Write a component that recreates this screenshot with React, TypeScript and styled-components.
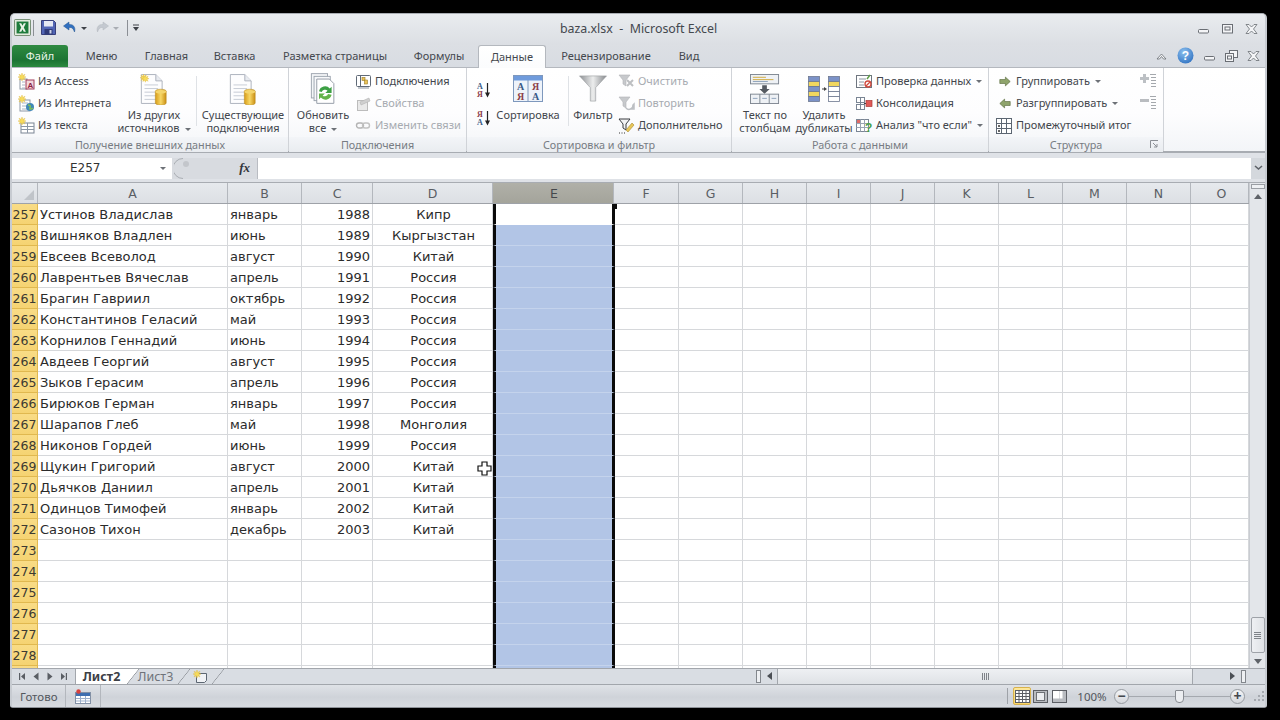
import React from "react";
import styled, { createGlobalStyle } from "styled-components";

const UI_FONT = `"Noto Sans", "DejaVu Sans", sans-serif`;
const CELL_FONT = `"DejaVu Sans", "Noto Sans", sans-serif`;

const Global = createGlobalStyle`
  html, body { margin: 0; height: 720px; background: #000; overflow: hidden; }
  #root { width: 1280px; height: 720px; }
  * { box-sizing: border-box; }
`;

const Screen = styled.div`
  width: 1280px;
  height: 720px;
  background: #000;
  padding: 13px 13px 12px 10px;
  font-family: ${UI_FONT};
`;
const Win = styled.div`
  position: relative;
  height: 695px;
  border-radius: 5px 5px 3px 3px;
  background: #d9dde3;
  border: 2px solid #c7cbd1;
  border-top: 1px solid #a9adb3;
  border-bottom: 1px solid #8e9298;
  display: flex;
  flex-direction: column;
  overflow: hidden;
`;

/* title bar */
const TitleBar = styled.div`
  height: 30px;
  flex: none;
  display: grid;
  grid-template-columns: 1fr auto 1fr;
  align-items: center;
  background: linear-gradient(#e9ecef, #dcdfe4);
`;
const Qat = styled.div`
  display: flex;
  align-items: center;
  padding: 0 0 3px 2px;
`;
const Title = styled.div`
  font-size: 12.4px;
  padding-bottom: 2px;
  color: #44484e;
`;
const WinBtns = styled.div`
  display: flex;
  justify-content: flex-end;
  align-items: center;
  gap: 11px;
  padding-right: 7px;
`;

/* tabs */
const TabRow = styled.div`
  height: 23px;
  flex: none;
  display: flex;
  align-items: flex-end;
  background: linear-gradient(#dcdfe4, #d8dce2);
`;
const FileTab = styled.div`
  width: 56px;
  height: 22px;
  margin-right: 1px;
  padding-bottom: 1px;
  border-radius: 3px 3px 0 0;
  background: linear-gradient(#2f8a42, #1c7433 70%, #2c8a3f);
  color: #e9f5ea;
  font-size: 11px;
  display: flex;
  align-items: center;
  justify-content: center;
`;
const Tab = styled.div<{ $w: number; $active?: boolean }>`
  width: ${(p) => p.$w}px;
  height: ${(p) => (p.$active ? 23 : 22)}px;
  padding-bottom: 1px;
  display: flex;
  align-items: center;
  justify-content: center;
  white-space: nowrap;
  font-size: 11px;
  color: #44484e;
  ${(p) =>
    p.$active &&
    `background: linear-gradient(#fff, #fbfcfd);
     border: 1px solid #b4b8be;
     border-bottom: none;
     border-radius: 3px 3px 0 0;
     margin-bottom: -1px;
     position: relative;
     z-index: 1;`}
`;
const TabSpacer = styled.div`
  flex: 1;
`;
const HelpBtns = styled.div`
  display: flex;
  align-items: center;
  gap: 9px;
  height: 23px;
  padding-right: 5px;
`;

/* ribbon */
const Ribbon = styled.div`
  height: 86px;
  flex: none;
  display: flex;
  border-top: 1px solid #b4b8be;
  border-bottom: 2px solid #a8acb2;
  background: linear-gradient(#fff, #fdfdfe 55%, #f3f5f8);
`;
const Group = styled.div<{ $w: number }>`
  position: relative;
  width: ${(p) => p.$w}px;
  flex: none;
  display: flex;
  flex-direction: column;
  border-right: 1px solid #d0d3d8;
`;
const GroupBody = styled.div<{ $pl: number }>`
  height: 69px;
  flex: none;
  display: flex;
  padding: 2px 0 0 ${(p) => p.$pl}px;
`;
const GroupLabel = styled.div`
  flex: 1;
  display: flex;
  align-items: center;
  justify-content: center;
  font-size: 10.8px;
  color: #777c83;
  background: linear-gradient(#f3f5f8, #e9ecf0);
`;
const Launcher = styled.div`
  position: absolute;
  right: 4px;
  bottom: 2px;
  width: 9px;
  height: 9px;
  display: flex;
`;
const Stack = styled.div<{ $w: number; $ml?: number }>`
  width: ${(p) => p.$w}px;
  margin-left: ${(p) => p.$ml ?? 0}px;
  flex: none;
  display: flex;
  flex-direction: column;
`;
const SortStack = styled.div`
  width: 17px;
  flex: none;
  display: flex;
  flex-direction: column;
  gap: 12px;
  padding-top: 12px;
`;
const SmallBtn = styled.div<{ $off?: boolean }>`
  height: 22px;
  display: flex;
  align-items: center;
  gap: 3px;
  white-space: nowrap;
  font-size: 11px;
  color: ${(p) => (p.$off ? "#a7abb1" : "#42464c")};
`;
const SmallLabel = styled.span`
  padding-bottom: 2px;
`;
const SmallIcon = styled.div`
  width: 17px;
  height: 17px;
  flex: none;
  display: flex;
  align-items: center;
  justify-content: center;
`;
const Caret = styled.span`
  width: 0;
  height: 0;
  margin-left: 5px;
  border: 3px solid transparent;
  border-top: 3px solid #6d7177;
  border-bottom: none;
  display: inline-block;
  vertical-align: middle;
`;
const BigBtn = styled.div<{ $w: number; $ml?: number }>`
  width: ${(p) => p.$w}px;
  margin-left: ${(p) => p.$ml ?? 0}px;
  flex: none;
  display: flex;
  flex-direction: column;
  align-items: center;
`;
const BigIcon = styled.div`
  height: 37px;
  flex: none;
  display: flex;
  align-items: center;
  justify-content: center;
`;
const BigText = styled.div`
  font-size: 11px;
  line-height: 13px;
  padding-top: 1px;
  color: #42464c;
  text-align: center;
  white-space: nowrap;
`;
const RibbonSep = styled.div<{ $ml: number }>`
  width: 1px;
  height: 50px;
  margin: 6px 0 0 ${(p) => p.$ml}px;
  flex: none;
  background: #dfe2e6;
`;

/* formula bar */
const FormulaBar = styled.div`
  height: 29px;
  flex: none;
  display: flex;
  align-items: center;
  background: #dfe2e7;
  padding: 4px 0 3px;
`;
const NameBox = styled.div`
  width: 160px;
  height: 21px;
  background: #fff;
  display: flex;
  align-items: center;
  justify-content: space-between;
  padding: 0 6px 0 58px;
  font-size: 12px;
  font-family: ${CELL_FONT};
  color: #333;
`;
const FxBox = styled.div`
  width: 85px;
  height: 21px;
  flex: none;
  display: flex;
  align-items: center;
  justify-content: space-between;
  padding: 0 7px 0 2px;
  background: #d8dbe0;
  font-family: "Liberation Serif", serif;
  font-style: italic;
  font-weight: bold;
  font-size: 13px;
  color: #33363b;
`;
const FormulaInput = styled.div`
  flex: 1;
  height: 21px;
  background: #fff;
  border-left: 1px solid #b9bcc2;
`;
const FormulaDrop = styled.div`
  width: 14px;
  height: 21px;
  flex: none;
  background: #d4d8dd;
  display: flex;
  align-items: center;
  justify-content: center;
`;

/* sheet */
const SheetArea = styled.div`
  flex: 1;
  min-height: 0;
  display: flex;
  border-top: 1px solid #a8acb2;
`;
const Sheet = styled.div`
  width: 1237px;
  flex: none;
  position: relative;
  overflow: hidden;
  background: #fff;
  font-family: ${CELL_FONT};
`;
const GRID = "26px 190px 74px 71px 120px 121px 65px repeat(7, 64px) 64px 58px";
const HeadRow = styled.div`
  display: grid;
  grid-template-columns: ${GRID};
  height: 21px;
  border-bottom: 1px solid #9ea2a8;
`;
const HeadCell = styled.div<{ $sel?: boolean; $pl?: number }>`
  display: flex;
  align-items: center;
  justify-content: center;
  padding-left: ${(p) => p.$pl ?? 0}px;
  font-size: 12.5px;
  color: ${(p) => (p.$sel ? "#45484c" : "#5a5e64")};
  background: ${(p) => (p.$sel ? "linear-gradient(#b0b0a8, #a4a49b)" : "linear-gradient(#e6e9ed, #dcdfe4)")};
  border-right: 1px solid #b3b7bd;
`;
const Corner = styled.div`
  background: linear-gradient(#e6e9ed, #dcdfe4);
  border-right: 1px solid #b3b7bd;
  display: flex;
  align-items: flex-end;
  justify-content: flex-end;
  padding: 0 3px 3px 0;
`;
const CornerMark = styled.div`
  width: 0;
  height: 0;
  border-left: 10px solid transparent;
  border-bottom: 10px solid #c0c4c9;
`;
const Row = styled.div`
  display: grid;
  grid-template-columns: ${GRID};
  height: 21px;
`;
const RowHead = styled.div`
  display: flex;
  align-items: center;
  justify-content: center;
  font-size: 12.5px;
  color: #3c3a32;
  background: linear-gradient(#f9dc86, #f5d372);
  border-bottom: 1px solid #e0b84f;
  border-right: 1px solid #e0b84f;
`;
const Cell = styled.div<{ $align?: string }>`
  display: flex;
  align-items: center;
  justify-content: ${(p) => p.$align ?? "flex-start"};
  padding: 0 2px 0 ${(p) => (p.$align === "center" ? 4 : 2)}px;
  font-size: 13px;
  white-space: nowrap;
  color: #2b2b2b;
  border-right: 1px solid #d6d8db;
  border-bottom: 1px solid #d6d8db;
`;
const SelCell = styled.div<{ $first?: boolean }>`
  margin-right: -1px;
  position: relative;
  background: ${(p) => (p.$first ? "#fff" : "#b2c5e6")};
  border-left: 3px solid #0a0a0a;
  border-right: 3px solid #0a0a0a;
  border-bottom: 1px solid ${(p) => (p.$first ? "#fff" : "#c4d3ec")};
`;
const FillHandle = styled.div`
  position: absolute;
  left: 600px;
  top: 21px;
  width: 5px;
  height: 5px;
  background: #0a0a0a;
`;
const CursorMark = styled.svg`
  position: absolute;
  left: 465px;
  top: 278px;
`;
const VScroll = styled.div`
  flex: 1;
  display: flex;
  flex-direction: column;
  align-items: center;
  background: #e3e6ea;
  border-left: 1px solid #c9ccd1;
`;
const VSplit = styled.div`
  width: 14px;
  height: 5px;
  margin-top: 1px;
  background: #eef0f3;
  border: 1px solid #9a9ea4;
`;
const VGap = styled.div<{ $h: number }>`
  height: ${(p) => p.$h}px;
  flex: none;
`;
const ArrowUp = styled.div`
  margin-top: 5px;
  width: 0;
  height: 0;
  border: 4px solid transparent;
  border-top: none;
  border-bottom: 5px solid #5e6268;
`;
const ArrowDown = styled.div`
  width: 0;
  height: 0;
  border: 4px solid transparent;
  border-bottom: none;
  border-top: 5px solid #5e6268;
`;
const VThumb = styled.div`
  width: 14px;
  height: 36px;
  border: 1px solid #9ea2a8;
  border-radius: 2px;
  background: linear-gradient(90deg, #eef0f3, #dfe2e6);
  display: flex;
  flex-direction: column;
  align-items: center;
  justify-content: center;
  gap: 1px;
`;
const GripLine = styled.div`
  width: 7px;
  height: 1px;
  background: #7f8389;
`;

/* sheet tabs + horizontal scroll */
const TabsBar = styled.div`
  height: 17px;
  flex: none;
  display: flex;
  align-items: stretch;
  background: #d9dde3;
  border-top: 1px solid #a2a6ac;
  border-bottom: 1px solid #a2a6ac;
`;
const NavBtns = styled.div`
  width: 64px;
  flex: none;
  display: flex;
  align-items: center;
  justify-content: space-between;
  padding: 0 7px 0 6px;
  border-right: 1px solid #a2a6ac;
`;
const SLANT_W = 12;
const SheetTab = styled.div<{ $active?: boolean }>`
  position: relative;
  width: 51px;
  flex: none;
  display: flex;
  align-items: center;
  justify-content: center;
  padding-left: ${(p) => (p.$active ? 0 : 6)}px;
  font-size: 12.5px;
  font-weight: ${(p) => (p.$active ? 700 : 400)};
  color: ${(p) => (p.$active ? "#3c4046" : "#6f737a")};
  background: ${(p) => (p.$active ? "#fff" : "transparent")};
  &::after {
    content: "";
    position: absolute;
    top: 0;
    right: -${SLANT_W}px;
    width: ${SLANT_W}px;
    height: 100%;
    background: linear-gradient(
      to top left,
      transparent calc(50% - 0.6px),
      #8f9399 50%,
      ${(p) => (p.$active ? "#fff" : "transparent")} calc(50% + 0.6px)
    );
  }
`;
const NewTab = styled.div`
  position: relative;
  width: 34px;
  flex: none;
  display: flex;
  align-items: center;
  padding-left: 15px;
  &::after {
    content: "";
    position: absolute;
    top: 0;
    right: -${SLANT_W}px;
    width: ${SLANT_W}px;
    height: 100%;
    background: linear-gradient(to top left, transparent calc(50% - 0.6px), #8f9399 50%, transparent calc(50% + 0.6px));
  }
`;
const TabsFill = styled.div`
  flex: 1;
`;
const HSplit = styled.div<{ $ml?: number; $mr?: number }>`
  width: 5px;
  margin: 1px ${(p) => p.$mr ?? 0}px 1px ${(p) => p.$ml ?? 0}px;
  flex: none;
  background: #eef0f3;
  border: 1px solid #83878d;
`;
const HLeft = styled.div`
  width: 0;
  height: 0;
  margin: 3px 5px 0 6px;
  border: 4px solid transparent;
  border-left: none;
  border-right: 5px solid #4a4e54;
`;
const HThumb = styled.div`
  width: 416px;
  flex: none;
  background: linear-gradient(#eef0f3, #dfe2e6);
  border-left: 1px solid #a2a6ac;
  border-right: 1px solid #a2a6ac;
  display: flex;
  align-items: center;
  justify-content: center;
  gap: 1px;
`;
const HGripLine = styled.div`
  width: 1px;
  height: 7px;
  background: #7f8389;
`;
const HRight = styled.div`
  width: 0;
  height: 0;
  margin: 3px 0 0 37px;
  border: 4px solid transparent;
  border-right: none;
  border-left: 5px solid #4a4e54;
`;

/* status bar */
const StatusBar = styled.div`
  height: 22px;
  flex: none;
  display: flex;
  align-items: center;
  background: linear-gradient(#dfe2e7, #cfd3d9 55%, #d8dbe0);
  font-size: 11.5px;
  color: #53575d;
`;
const StatusText = styled.div`
  width: 54px;
  height: 100%;
  flex: none;
  display: flex;
  align-items: center;
  padding-left: 8px;
  border-right: 1px solid #b3b7bd;
`;
const StatusMacro = styled.div`
  width: 35px;
  height: 100%;
  flex: none;
  display: flex;
  align-items: center;
  justify-content: center;
  border-right: 1px solid #b3b7bd;
`;
const StatusRight = styled.div`
  margin-left: auto;
  display: flex;
  align-items: center;
  height: 100%;
`;
const ViewSep = styled.div`
  width: 1px;
  height: 16px;
  margin-right: 5px;
  background: #9ea2a8;
`;
const ViewBtn = styled.div<{ $on?: boolean; $mr: number }>`
  width: 18px;
  height: 18px;
  margin-right: ${(p) => p.$mr}px;
  display: flex;
  align-items: center;
  justify-content: center;
  border-radius: 2px;
  ${(p) => p.$on && "background: linear-gradient(#fde79b, #f9d568); border: 1px solid #d8b24c;"}
`;
const Zoom = styled.div`
  width: 38px;
  margin: 0 3px 0 2px;
  text-align: center;
  font-size: 11.5px;
`;
const RoundBtn = styled.div`
  width: 15px;
  height: 15px;
  flex: none;
  border-radius: 50%;
  border: 1px solid #979ba1;
  background: linear-gradient(#f4f5f7, #d4d7dc);
  display: flex;
  align-items: center;
  justify-content: center;
  font-size: 14px;
  font-weight: bold;
  line-height: 1;
  color: #44484e;
`;
const Slider = styled.div`
  position: relative;
  width: 101px;
  height: 1px;
  background: #a5a9af;
`;
const SliderThumb = styled.div`
  position: absolute;
  left: 46px;
  top: -6px;
  width: 9px;
  height: 13px;
  background: #eceef1;
  border: 1px solid #888c92;
  border-radius: 1px 1px 4px 4px;
`;
const Grip = styled.svg`
  margin-left: 9px;
`;

/* icons */
const Star = ({ x = 0, y = 0 }: { x?: number; y?: number }) => (
  <path
    transform={`translate(${x} ${y})`}
    d="M4 0l.8 2.4L7 1.2 5.8 3.4 8 4 5.8 4.8 7 7 4.8 5.8 4 8 3.2 5.8 1 7l1.200-2.200L0 4l2.200-.6L1 1.200l2.200 1.200z"
    fill="#f7dc5c"
    stroke="#e0b93a"
    strokeWidth=".4"
  />
);
const Sheetlet = ({ x, y, w, h }: { x: number; y: number; w: number; h: number }) => (
  <g>
    <rect x={x} y={y} width={w} height={h} fill="#fff" stroke="#8d97a5" />
    <path d={`M${x + 2} ${y + 3}h${w - 4}M${x + 2} ${y + 6}h${w - 4}M${x + 2} ${y + 9}h${w - 4}`} stroke="#a7b2c2" />
  </g>
);
const IconAccess = () => (
  <svg width="17" height="17" viewBox="0 0 17 17">
    <Sheetlet x={2} y={6} w={7} h={10} />
    <rect x={8} y={7} width={8} height={9} fill="#f3d7dc" stroke="#a03a58" />
    <text x={9.500} y={15} fontSize="8" fontWeight="bold" fill="#8e1f45" fontFamily="Liberation Sans">A</text>
    <Star x={0} y={0} />
  </svg>
);
const IconWeb = () => (
  <svg width="17" height="17" viewBox="0 0 17 17">
    <Sheetlet x={2} y={5} w={10} h={11} />
    <circle cx="12" cy="12" r="4" fill="#3f87b8" />
    <path d="M10 10c2 0 3 1 2 3s2 1 3 0" stroke="#7fbf58" strokeWidth="1.500" fill="none" />
    <Star x={0} y={0} />
  </svg>
);
const IconText = () => (
  <svg width="17" height="17" viewBox="0 0 17 17">
    <rect x="3" y="6" width="13" height="10" fill="#fff" stroke="#7a8594" />
    <path d="M3 9.500h13M3 12.500h13M9.500 6v10" stroke="#8c97a6" />
    <Star x={0} y={0} />
  </svg>
);
const DocDb = ({ star }: { star?: boolean }) => (
  <svg width="28" height="32" viewBox="3 1 31 35">
    <defs>
      <linearGradient id="db" x1="0" x2="1">
        <stop offset="0" stopColor="#d89c18" />
        <stop offset=".5" stopColor="#f7d766" />
        <stop offset="1" stopColor="#c98d12" />
      </linearGradient>
    </defs>
    <path d="M4.500 2.500h16l7 7v25h-23z" fill="#fdfdfe" stroke="#a6adb8" />
    <path d="M20.500 2.500v7h7" fill="#e8ebf0" stroke="#a6adb8" />
    <path d="M8 14h15M8 18h15M8 22h13M8 26h13M8 30h13" stroke="#c2c8d2" />
    <path d="M20 21c0-3 12-3 12 0v13c0 3-12 3-12 0z" fill="url(#db)" stroke="#b88a1e" strokeWidth=".6" />
    <ellipse cx="26" cy="21.500" rx="6" ry="2" fill="#f4d56c" />
    {star && <Star x={3} y={2} />}
    {star && <Star x={5} y={3} />}
  </svg>
);
const IconRefreshAll = () => (
  <svg width="27" height="33" viewBox="0 0 30 36">
    <rect x="1.500" y="1.500" width="18" height="27" fill="#f4f6f8" stroke="#98a0ab" />
    <rect x="4.500" y="4.500" width="18" height="27" fill="#f8f9fb" stroke="#98a0ab" />
    <path d="M7.500 7.500h14l5 5v22h-19z" fill="#fff" stroke="#8d95a1" />
    <path d="M10 21a7 7 0 0 1 12-3l2-2v7h-7l2.500-2.500A4 4 0 0 0 13 22z" fill="#3da044" />
    <path d="M24 25a7 7 0 0 1-12 3l-2 2v-6.500h6.500L14 26a4 4 0 0 0 6-2z" fill="#63b44a" />
  </svg>
);
const IconConnections = () => (
  <svg width="17" height="17" viewBox="0 0 17 17">
    <rect x="1.500" y="2.500" width="14" height="11" rx="1" fill="#fff" stroke="#5f6976" />
    <path d="M5.500 2.500v11" stroke="#5f6976" />
    <rect x="7" y="4.500" width="3" height="3" fill="#ecc55a" stroke="#987a25" strokeWidth=".6" />
    <rect x="9.500" y="7" width="3" height="4" fill="#ecc55a" stroke="#987a25" strokeWidth=".6" />
    <path d="M3 15h11" stroke="#8d95a1" />
  </svg>
);
const IconProps = () => (
  <svg width="17" height="17" viewBox="0 0 17 17">
    <rect x="2.500" y="5.500" width="10" height="10" fill="#e9e9e9" stroke="#bcbcbc" />
    <path d="M5 7l9-4 1 3-9 4z" fill="#cfcfcf" stroke="#b3b3b3" strokeWidth=".6" />
  </svg>
);
const IconLinks = () => (
  <svg width="17" height="17" viewBox="0 0 17 17">
    <rect x="1.500" y="6" width="7" height="5" rx="2.500" fill="none" stroke="#b4b4b4" strokeWidth="1.400" />
    <rect x="7.500" y="6" width="7" height="5" rx="2.500" fill="none" stroke="#c2c2c2" strokeWidth="1.400" />
  </svg>
);
const IconSortAZ = ({ up }: { up?: boolean }) => (
  <svg width="17" height="16" viewBox="0 0 17 16">
    <text x="2" y="7" fontSize="8" fontWeight="bold" fontFamily="Liberation Serif" fill={up ? "#8c3f4a" : "#3a5a86"}>
      {up ? "Я" : "А"}
    </text>
    <text x="2" y="14.500" fontSize="8" fontWeight="bold" fontFamily="Liberation Serif" fill={up ? "#3a5a86" : "#8c3f4a"}>
      {up ? "А" : "Я"}
    </text>
    <path d="M12.500 1v11" stroke="#222" strokeWidth="1.200" />
    <path d="M10 10.500h5l-2.500 5z" fill="#222" />
  </svg>
);
const IconSortBig = () => (
  <svg width="30" height="27" viewBox="0 0 30 27">
    <rect x=".5" y=".5" width="29" height="26" fill="#eef3fa" stroke="#7e98bd" />
    <rect x="1" y="1" width="28" height="4.500" fill="#6f9bdc" />
    <path d="M15 5v21" stroke="#7e98bd" />
    <g fontSize="10" fontWeight="bold" fontFamily="Liberation Serif">
      <text x="4" y="15" fill="#3a5a86">А</text>
      <text x="19" y="15" fill="#8c3f4a">Я</text>
      <text x="4" y="24.500" fill="#8c3f4a">Я</text>
      <text x="19" y="24.500" fill="#3a5a86">А</text>
    </g>
  </svg>
);
const IconFunnel = () => (
  <svg width="30" height="27" viewBox="0 0 32 30">
    <defs>
      <linearGradient id="fn" x1="0" x2="1">
        <stop offset="0" stopColor="#8d9094" />
        <stop offset=".5" stopColor="#eceded" />
        <stop offset="1" stopColor="#85888c" />
      </linearGradient>
    </defs>
    <path d="M1 1h30L19 14v15h-6V14z" fill="url(#fn)" stroke="#9a9da1" strokeWidth=".7" />
  </svg>
);
const IconClear = ({ kind }: { kind: "clear" | "redo" | "adv" }) => (
  <svg width="17" height="17" viewBox="0 0 17 17">
    <path
      d="M1 2h11L8 7v6L5 11V7z"
      fill={kind === "adv" ? "#f2f3f4" : "#c7c9cc"}
      stroke={kind === "adv" ? "#3a3d41" : "#b2b4b7"}
      strokeWidth={kind === "adv" ? 1 : 0.6}
    />
    {kind === "clear" && <path d="M9 7l6 6M15 7l-6 6" stroke="#bdbfc2" strokeWidth="2" />}
    {kind === "redo" && <path d="M8 13a4 4 0 0 0 7-3l1-1v5h-4" fill="none" stroke="#bcbfc3" strokeWidth="1.500" />}
    {kind === "adv" && (
      <>
        <path d="M8 13l6-7 2 2-6 7z" fill="#e8c659" stroke="#a88a2c" strokeWidth=".6" />
        <path d="M1 16h1M3.500 16h1M6 16h1" stroke="#333" />
      </>
    )}
  </svg>
);
const IconTextCols = () => (
  <svg width="30" height="30" viewBox="0 0 32 32">
    <rect x=".5" y=".5" width="30" height="10" fill="#eef1f5" stroke="#7d8590" />
    <path d="M3 3.500h14M3 6h22" stroke="#d0a93a" />
    <path d="M3 8h16" stroke="#8ea1bb" />
    <path d="M13 12h5v4h3l-5.500 5-5.500-5h3z" fill="#555a61" />
    <rect x=".5" y="21.500" width="30" height="10" fill="#eef1f5" stroke="#7d8590" />
    <path d="M10.500 21.500v10M20.500 21.500v10" stroke="#7d8590" />
    <path d="M3 26h5M13 26h5M23 26h5" stroke="#8ea1bb" />
  </svg>
);
const IconDedupe = () => (
  <svg width="32" height="26" viewBox="0 0 32 26">
    <g stroke="#6d7890" strokeWidth=".8">
      <rect x=".5" y=".5" width="11" height="5" fill="#7b92c8" />
      <rect x=".5" y="5.500" width="11" height="5" fill="#f1d75f" />
      <rect x=".5" y="10.500" width="11" height="5" fill="#7b92c8" />
      <rect x=".5" y="15.500" width="11" height="5" fill="#f1d75f" />
      <rect x=".5" y="20.500" width="11" height="5" fill="#7b92c8" />
      <rect x="20.500" y=".5" width="11" height="5" fill="#7b92c8" />
      <rect x="20.500" y="5.500" width="11" height="5" fill="#f1d75f" />
      <rect x="20.500" y="10.500" width="11" height="5" fill="#fff" />
      <rect x="20.500" y="15.500" width="11" height="5" fill="#fff" />
      <rect x="20.500" y="20.500" width="11" height="5" fill="#fff" />
    </g>
    <path d="M14 13h3" stroke="#444" />
    <path d="M16 11l3 2-3 2z" fill="#444" />
  </svg>
);
const IconValidate = () => (
  <svg width="17" height="17" viewBox="0 0 17 17">
    <rect x=".5" y="2.500" width="15" height="12" fill="#fff" stroke="#6f7680" />
    <path d="M3 6h7M3 9h5M3 12h5" stroke="#8b94a1" />
    <circle cx="12" cy="11" r="3" fill="#fff" stroke="#d04a3e" strokeWidth="1.300" />
    <path d="M10 13l4-4" stroke="#d04a3e" strokeWidth="1.200" />
    <path d="M11 6l3-4" stroke="#5a9b44" strokeWidth="1.400" />
  </svg>
);
const IconConsolidate = () => (
  <svg width="17" height="17" viewBox="0 0 17 17">
    <rect x=".5" y="2.500" width="8" height="5" fill="#fff" stroke="#7a8594" />
    <rect x=".5" y="9.500" width="8" height="5" fill="#fff" stroke="#7a8594" />
    <path d="M4.500 2.500v12" stroke="#7a8594" />
    <rect x="10" y="5.500" width="6" height="6" fill="#e05a58" stroke="#a83936" strokeWidth=".7" />
    <path d="M8 8.500h2" stroke="#444" />
  </svg>
);
const IconWhatIf = () => (
  <svg width="17" height="17" viewBox="0 0 17 17">
    <rect x=".5" y="2.500" width="12" height="12" fill="#fff" stroke="#7a8594" />
    <path d="M.5 6.500h12M.5 10.500h12M4.500 2.500v12M8.500 2.500v12" stroke="#9aa4b2" />
    <rect x="1" y="3" width="3" height="3" fill="#df6a66" />
    <text x="9" y="15" fontSize="12" fontWeight="bold" fontFamily="Liberation Sans" fill="#4aa14a">?</text>
  </svg>
);
const IconArrow = ({ dir }: { dir: "r" | "l" }) => (
  <svg width="12" height="11" viewBox="0 0 15 13">
    <path
      transform={dir === "l" ? "matrix(-1 0 0 1 15 0)" : undefined}
      d="M1 4h7V1l6 5.500-6 5.500V9H1z"
      fill="#8fa46c"
      stroke="#5b6d40"
      strokeWidth=".8"
    />
  </svg>
);
const IconSubtotal = () => (
  <svg width="17" height="17" viewBox="0 0 17 17">
    <rect x=".5" y="1.500" width="15" height="15" fill="#fff" stroke="#5c6672" />
    <path d="M.5 6.500h15M.5 11.500h15M5.500 1.500v15M10.500 1.500v15" stroke="#5c6672" />
    <path d="M2 9h2M3 8v2M2 14h2M3 13v2" stroke="#333" />
  </svg>
);
const IconDetail = ({ minus }: { minus?: boolean }) => (
  <svg width="18" height="17" viewBox="0 0 18 17">
    {minus ? <rect x="1" y="4" width="9" height="3" fill="#b9bcc0" /> : <path d="M4 1h3v3h3v3H7v3H4V7H1V4h3z" fill="#bcc0c4" />}
    <path d="M11 1.500h6M12 4.500h5M12 7.500h5M12 10.500h5M12 13.500h5" stroke="#a4a8ad" />
  </svg>
);

const IconExcel = () => (
  <svg width="17" height="17" viewBox="0 0 20 20">
    <rect x=".5" y=".5" width="19" height="19" rx="1.500" fill="#e3ecdf" stroke="#5c7a5a" />
    <rect x="3" y="3" width="14" height="14" fill="#1d7b3c" />
    <path d="M6 5h2.500L10 8l1.500-3H14l-2.500 5L14 15h-2.500L10 12l-1.500 3H6l2.500-5z" fill="#e9f2e6" />
  </svg>
);
const IconSave = () => (
  <svg width="15" height="15" viewBox="0 0 15 15">
    <path d="M.5.500h12l2 2v12H.5z" fill="#5165b5" stroke="#39407a" />
    <rect x="3" y="1" width="9" height="5.500" fill="#e5e8f3" />
    <rect x="3.500" y="9" width="8" height="5.500" fill="#2f3a78" />
    <rect x="8.500" y="10" width="2" height="3.500" fill="#cfd5ea" />
  </svg>
);
const IconUndo = ({ off }: { off?: boolean }) => (
  <svg width="13" height="13" viewBox="0 0 13 13" style={off ? { transform: "scaleX(-1)" } : undefined}>
    <path
      d="M11.500 11C13 6 10 3 6 3.500V1L.5 5 6 9V6.500c3-.5 4.500 1.500 5.500 4.500z"
      fill={off ? "#c4c9d0" : "#3170c0"}
      stroke={off ? "#b3b8bf" : "#25568f"}
      strokeWidth=".5"
    />
  </svg>
);
const QCaret = styled.span<{ $off?: boolean; $ml: number }>`
  width: 0;
  height: 0;
  margin: 2px 0 0 ${(p) => p.$ml}px;
  border: 3px solid transparent;
  border-top: 3px solid ${(p) => (p.$off ? "#a9adb3" : "#3e4248")};
  border-bottom: none;
`;
const QSep = styled.span<{ $ml: number }>`
  width: 1px;
  height: 16px;
  margin-left: ${(p) => p.$ml}px;
  background: #8b8f95;
`;
const QItem = styled.span<{ $ml: number }>`
  margin-left: ${(p) => p.$ml}px;
  display: flex;
`;
const Btn = ({ kind }: { kind: "min" | "max" | "restore" | "close" | "up" }) => (
  <svg width="13" height="12" viewBox="0 0 13 12">
    {kind === "min" && <rect x="1.500" y="6.500" width="10" height="3.500" rx="1" fill="#f4f5f7" stroke="#6a6e74" />}
    {kind === "max" && (
      <>
        <rect x="1.500" y="1.500" width="10" height="8.500" fill="#f4f5f7" stroke="#6a6e74" />
        <rect x="4" y="4" width="5" height="3" fill="none" stroke="#6a6e74" />
      </>
    )}
    {kind === "restore" && (
      <>
        <rect x="4.500" y=".5" width="8" height="7" fill="#f4f5f7" stroke="#6a6e74" />
        <rect x=".5" y="3.500" width="8" height="8" fill="#f4f5f7" stroke="#6a6e74" />
        <rect x="2.500" y="6" width="4" height="3" fill="none" stroke="#6a6e74" />
      </>
    )}
    {kind === "close" && (
      <path
        d="M1 1.500h3L6.500 4 9 1.500h3L8.500 6l3.500 4.500H9L6.500 8 4 10.500H1L4.500 6z"
        fill="#f4f5f7"
        stroke="#6a6e74"
        strokeWidth=".8"
      />
    )}
    {kind === "up" && <path d="M2 9l4.500-5L11 9H8.500L6.500 6.500 4.500 9z" fill="#f4f5f7" stroke="#6a6e74" strokeWidth=".8" />}
  </svg>
);
const IconHelp = () => (
  <svg width="17" height="17" viewBox="0 0 17 17">
    <defs>
      <radialGradient id="hp" cx=".4" cy=".3" r=".8">
        <stop offset="0" stopColor="#8cc0ef" />
        <stop offset="1" stopColor="#2c6fc0" />
      </radialGradient>
    </defs>
    <circle cx="8.500" cy="8.500" r="8" fill="url(#hp)" />
    <text x="8.500" y="13" textAnchor="middle" fontSize="12" fontWeight="bold" fontFamily="Liberation Sans" fill="#fff">?</text>
  </svg>
);
const NavIcon = ({ kind }: { kind: "first" | "prev" | "next" | "last" }) => (
  <svg width="8" height="9" viewBox="0 0 8 9" fill="#5a5e64">
    {kind === "first" && <path d="M1 1h1.200v7H1zM7 1v7L3 4.500z" />}
    {kind === "prev" && <path d="M6.500 .5v8L1.500 4.500z" />}
    {kind === "next" && <path d="M1.500 .5v8l5-4z" />}
    {kind === "last" && <path d="M7 1H5.800v7H7zM1 1v7l4-3.500z" />}
  </svg>
);
const IconNewSheet = () => (
  <svg width="15" height="13" viewBox="0 0 15 13">
    <path d="M3.500 3.500h10v7l-2 2h-8z" fill="#f0f2f5" stroke="#5c6672" />
    <Star x={0} y={0} />
  </svg>
);
const IconMacro = () => (
  <svg width="16" height="15" viewBox="0 0 16 15">
    <rect x=".5" y="3.500" width="15" height="11" fill="#fff" stroke="#8290a5" />
    <rect x="1" y="4" width="14" height="3" fill="#3f6fb0" />
    <path d="M1 9.500h14M1 12h14M5.500 7v7M10.500 7v7" stroke="#9db0cb" />
    <circle cx="3.500" cy="2.500" r="2.200" fill="#d8413c" />
  </svg>
);
const ViewIcon = ({ kind }: { kind: "normal" | "layout" | "page" }) => (
  <svg width="15" height="13" viewBox="0 0 15 13">
    {kind === "normal" && (
      <>
        <rect x=".5" y=".5" width="14" height="12" fill="#fff" stroke="#5c5f65" />
        <path d="M.5 3.500h14M.5 6.500h14M.5 9.500h14M4 .5v12M7.500 .5v12M11 .5v12" stroke="#5c5f65" />
      </>
    )}
    {kind === "layout" && (
      <>
        <rect x=".5" y=".5" width="14" height="12" fill="#b9bcc1" stroke="#5c5f65" />
        <rect x="3.500" y="2.500" width="8" height="8" fill="#eceef1" stroke="#6d7076" />
      </>
    )}
    {kind === "page" && (
      <>
        <rect x=".5" y=".5" width="14" height="12" fill="#b9bcc1" stroke="#5c5f65" />
        <rect x="1" y="1" width="6" height="7.500" fill="#fff" />
        <rect x="7.500" y="1" width="3" height="7.500" fill="#fff" />
      </>
    )}
  </svg>
);

/* data */
const PEOPLE: [number, string, string, number, string][] = [
  [257, "Устинов Владислав", "январь", 1988, "Кипр"],
  [258, "Вишняков Владлен", "июнь", 1989, "Кыргызстан"],
  [259, "Евсеев Всеволод", "август", 1990, "Китай"],
  [260, "Лаврентьев Вячеслав", "апрель", 1991, "Россия"],
  [261, "Брагин Гавриил", "октябрь", 1992, "Россия"],
  [262, "Константинов Геласий", "май", 1993, "Россия"],
  [263, "Корнилов Геннадий", "июнь", 1994, "Россия"],
  [264, "Авдеев Георгий", "август", 1995, "Россия"],
  [265, "Зыков Герасим", "апрель", 1996, "Россия"],
  [266, "Бирюков Герман", "январь", 1997, "Россия"],
  [267, "Шарапов Глеб", "май", 1998, "Монголия"],
  [268, "Никонов Гордей", "июнь", 1999, "Россия"],
  [269, "Щукин Григорий", "август", 2000, "Китай"],
  [270, "Дьячков Даниил", "апрель", 2001, "Китай"],
  [271, "Одинцов Тимофей", "январь", 2002, "Китай"],
  [272, "Сазонов Тихон", "декабрь", 2003, "Китай"],
];
const EXTRA_ROWS = [273, 274, 275, 276, 277, 278, 279];
const COLS = ["A", "B", "C", "D", "E", "F", "G", "H", "I", "J", "K", "L", "M", "N", "O"];
const HEAD_NUDGE: Record<string, number> = { E: 2, O: 4 };
const EMPTY_TAIL = ["F", "G", "H", "I", "J", "K", "L", "M", "N", "O"];

const Small = ({ icon, text, off, caret }: { icon: React.ReactNode; text: string; off?: boolean; caret?: boolean }) => (
  <SmallBtn $off={off}>
    <SmallIcon>{icon}</SmallIcon>
    <SmallLabel>
      {text}
      {caret && <Caret />}
    </SmallLabel>
  </SmallBtn>
);

const RibbonBar = () => (
  <Ribbon>
    <Group $w={277}>
      <GroupBody $pl={6}>
        <Stack $w={93}>
          <Small icon={<IconAccess />} text="Из Access" />
          <Small icon={<IconWeb />} text="Из Интернета" />
          <Small icon={<IconText />} text="Из текста" />
        </Stack>
        <BigBtn $w={74} $ml={6}>
          <BigIcon>
            <DocDb star />
          </BigIcon>
          <BigText>
            Из других
            <br />
            источников
            <Caret />
          </BigText>
        </BigBtn>
        <RibbonSep $ml={5} />
        <BigBtn $w={80} $ml={6}>
          <BigIcon>
            <DocDb />
          </BigIcon>
          <BigText>
            Существующие
            <br />
            подключения
          </BigText>
        </BigBtn>
      </GroupBody>
      <GroupLabel>Получение внешних данных</GroupLabel>
    </Group>
    <Group $w={178}>
      <GroupBody $pl={6}>
        <BigBtn $w={56}>
          <BigIcon>
            <IconRefreshAll />
          </BigIcon>
          <BigText>
            Обновить
            <br />
            все
            <Caret />
          </BigText>
        </BigBtn>
        <Stack $w={105} $ml={4}>
          <Small icon={<IconConnections />} text="Подключения" />
          <Small icon={<IconProps />} text="Свойства" off />
          <Small icon={<IconLinks />} text="Изменить связи" off />
        </Stack>
      </GroupBody>
      <GroupLabel>Подключения</GroupLabel>
    </Group>
    <Group $w={265}>
      <GroupBody $pl={8}>
        <SortStack>
          <IconSortAZ />
          <IconSortAZ up />
        </SortStack>
        <BigBtn $w={68} $ml={2}>
          <BigIcon>
            <IconSortBig />
          </BigIcon>
          <BigText>Сортировка</BigText>
        </BigBtn>
        <RibbonSep $ml={6} />
        <BigBtn $w={46} $ml={1}>
          <BigIcon>
            <IconFunnel />
          </BigIcon>
          <BigText>Фильтр</BigText>
        </BigBtn>
        <Stack $w={112} $ml={2}>
          <Small icon={<IconClear kind="clear" />} text="Очистить" off />
          <Small icon={<IconClear kind="redo" />} text="Повторить" off />
          <Small icon={<IconClear kind="adv" />} text="Дополнительно" />
        </Stack>
      </GroupBody>
      <GroupLabel>Сортировка и фильтр</GroupLabel>
    </Group>
    <Group $w={257}>
      <GroupBody $pl={7}>
        <BigBtn $w={52}>
          <BigIcon>
            <IconTextCols />
          </BigIcon>
          <BigText>
            Текст по
            <br />
            столбцам
          </BigText>
        </BigBtn>
        <BigBtn $w={58} $ml={4}>
          <BigIcon>
            <IconDedupe />
          </BigIcon>
          <BigText>
            Удалить
            <br />
            дубликаты
          </BigText>
        </BigBtn>
        <Stack $w={128} $ml={3}>
          <Small icon={<IconValidate />} text="Проверка данных" caret />
          <Small icon={<IconConsolidate />} text="Консолидация" />
          <Small icon={<IconWhatIf />} text={'Анализ "что если"'} caret />
        </Stack>
      </GroupBody>
      <GroupLabel>Работа с данными</GroupLabel>
    </Group>
    <Group $w={175}>
      <GroupBody $pl={7}>
        <Stack $w={143}>
          <Small icon={<IconArrow dir="r" />} text="Группировать" caret />
          <Small icon={<IconArrow dir="l" />} text="Разгруппировать" caret />
          <Small icon={<IconSubtotal />} text="Промежуточный итог" />
        </Stack>
        <Stack $w={18}>
          <SmallBtn>
            <IconDetail />
          </SmallBtn>
          <SmallBtn>
            <IconDetail minus />
          </SmallBtn>
        </Stack>
      </GroupBody>
      <GroupLabel>Структура</GroupLabel>
      <Launcher>
        <svg width="9" height="9" viewBox="0 0 9 9">
          <path d="M.5 8V.5H8" fill="none" stroke="#8b8f95" />
          <path d="M3 3l4 4M4 7h3V4" fill="none" stroke="#8b8f95" />
        </svg>
      </Launcher>
    </Group>
  </Ribbon>
);

export default function App() {
  return (
    <Screen>
      <Global />
      <Win>
        <TitleBar>
          <Qat>
            <IconExcel />
            <QSep $ml={2} />
            <QItem $ml={7}>
              <IconSave />
            </QItem>
            <QItem $ml={7}>
              <IconUndo />
            </QItem>
            <QCaret $ml={5} />
            <QItem $ml={9}>
              <IconUndo off />
            </QItem>
            <QCaret $off $ml={4} />
            <QSep $ml={8} />
            <QItem $ml={4}>
              <svg width="8" height="8" viewBox="0 0 8 8">
                <path d="M1 1h6" stroke="#3e4248" />
                <path d="M1 3h6L4 7z" fill="#3e4248" />
              </svg>
            </QItem>
          </Qat>
          <Title>baza.xlsx&nbsp; -&nbsp; Microsoft Excel</Title>
          <WinBtns>
            <Btn kind="min" />
            <Btn kind="max" />
            <Btn kind="close" />
          </WinBtns>
        </TitleBar>
        <TabRow>
          <FileTab>Файл</FileTab>
          <Tab $w={65}>Меню</Tab>
          <Tab $w={65}>Главная</Tab>
          <Tab $w={71}>Вставка</Tab>
          <Tab $w={130}>Разметка страницы</Tab>
          <Tab $w={78}>Формулы</Tab>
          <Tab $w={68} $active>
            Данные
          </Tab>
          <Tab $w={120}>Рецензирование</Tab>
          <Tab $w={46}>Вид</Tab>
          <TabSpacer />
          <HelpBtns>
            <Btn kind="up" />
            <IconHelp />
            <Btn kind="min" />
            <Btn kind="restore" />
            <Btn kind="close" />
          </HelpBtns>
        </TabRow>
        <RibbonBar />
        <FormulaBar>
          <NameBox>
            E257
            <Caret />
          </NameBox>
          <FxBox>
            <svg width="26" height="21" viewBox="0 0 26 21">
              <path d="M9 .5A10 10 0 0 0 9 20.500" fill="none" stroke="#a9adb3" />
              <circle cx="12" cy="6" r="3" fill="#c3c6cb" />
            </svg>
            <span>fx</span>
          </FxBox>
          <FormulaInput />
          <FormulaDrop>
            <svg width="9" height="6" viewBox="0 0 9 6">
              <path d="M1 1l3.500 3L8 1" fill="none" stroke="#5e6268" strokeWidth="1.600" />
            </svg>
          </FormulaDrop>
        </FormulaBar>
        <SheetArea>
          <Sheet>
            <HeadRow>
              <Corner>
                <CornerMark />
              </Corner>
              {COLS.map((c) => (
                <HeadCell key={c} $sel={c === "E"} $pl={HEAD_NUDGE[c]}>
                  {c}
                </HeadCell>
              ))}
            </HeadRow>
            {PEOPLE.map(([n, name, month, year, country]) => (
              <Row key={n}>
                <RowHead>{n}</RowHead>
                <Cell>{name}</Cell>
                <Cell>{month}</Cell>
                <Cell $align="flex-end">{year}</Cell>
                <Cell $align="center">{country}</Cell>
                <SelCell $first={n === 257} />
                {EMPTY_TAIL.map((c) => (
                  <Cell key={c} />
                ))}
              </Row>
            ))}
            {EXTRA_ROWS.map((n) => (
              <Row key={n}>
                <RowHead>{n < 279 ? n : ""}</RowHead>
                <Cell />
                <Cell />
                <Cell />
                <Cell />
                <SelCell />
                {EMPTY_TAIL.map((c) => (
                  <Cell key={c} />
                ))}
              </Row>
            ))}
            <FillHandle />
            <CursorMark width="15" height="15" viewBox="0 0 15 15">
              <path
                d="M5 1h5v4h4v5h-4v4H5v-4H1V5h4z"
                fill="#fff"
                stroke="#111"
                strokeWidth="1.200"
              />
            </CursorMark>
          </Sheet>
          <VScroll>
            <VSplit />
            <ArrowUp />
            <VGap $h={418} />
            <VThumb>
              <GripLine />
              <GripLine />
              <GripLine />
              <GripLine />
            </VThumb>
            <VGap $h={6} />
            <ArrowDown />
          </VScroll>
        </SheetArea>
        <TabsBar>
          <NavBtns>
            <NavIcon kind="first" />
            <NavIcon kind="prev" />
            <NavIcon kind="next" />
            <NavIcon kind="last" />
          </NavBtns>
          <SheetTab $active>Лист2</SheetTab>
          <SheetTab>Лист3</SheetTab>
          <NewTab>
            <IconNewSheet />
          </NewTab>
          <TabsFill />
          <HSplit />
          <HLeft />
          <HThumb>
            <HGripLine />
            <HGripLine />
            <HGripLine />
            <HGripLine />
          </HThumb>
          <HRight />
          <HSplit $ml={6} $mr={19} />
        </TabsBar>
        <StatusBar>
          <StatusText>Готово</StatusText>
          <StatusMacro>
            <IconMacro />
          </StatusMacro>
          <StatusRight>
            <ViewSep />
            <ViewBtn $on $mr={0}>
              <ViewIcon kind="normal" />
            </ViewBtn>
            <ViewBtn $mr={1}>
              <ViewIcon kind="layout" />
            </ViewBtn>
            <ViewBtn $mr={3}>
              <ViewIcon kind="page" />
            </ViewBtn>
            <Zoom>100%</Zoom>
            <RoundBtn>−</RoundBtn>
            <Slider>
              <SliderThumb />
            </Slider>
            <RoundBtn>+</RoundBtn>
            <Grip width="11" height="11" viewBox="0 0 11 11" fill="#a5a9af">
              <rect x="8" y="0" width="2" height="2" />
              <rect x="4" y="4" width="2" height="2" />
              <rect x="8" y="4" width="2" height="2" />
              <rect x="0" y="8" width="2" height="2" />
              <rect x="4" y="8" width="2" height="2" />
              <rect x="8" y="8" width="2" height="2" />
            </Grip>
          </StatusRight>
        </StatusBar>
      </Win>
    </Screen>
  );
}
